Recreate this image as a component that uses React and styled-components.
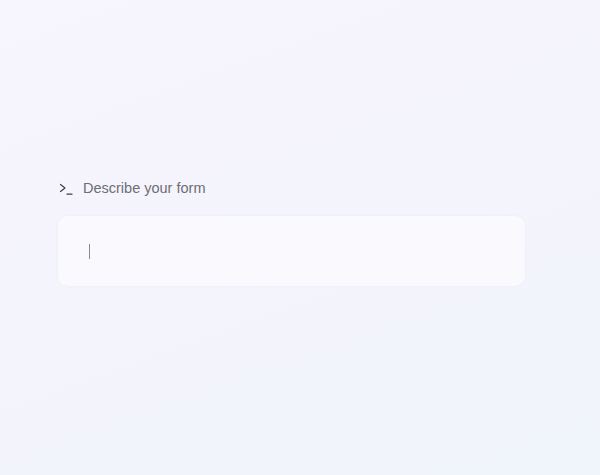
import React from 'react';
import styled, { createGlobalStyle } from 'styled-components';

const GlobalStyle = createGlobalStyle`
  html, body {
    margin: 0;
    padding: 0;
  }
  body {
    font-family: 'Liberation Sans', Arial, sans-serif;
  }
`;

const Page = styled.div`
  width: 600px;
  height: 475px;
  box-sizing: border-box;
  padding: 179px 75px 0 58px;
  background: linear-gradient(160deg, #f7f5fd 0%, #f4f4fc 50%, #f0f4fb 100%);
`;

const Label = styled.div`
  display: flex;
  align-items: center;
  gap: 9px;
  height: 18px;
  padding-left: 1px;
  color: #6e6e76;
  font-size: 14.5px;
`;

const Prompt = styled.svg`
  width: 15px;
  height: 15px;
  flex-shrink: 0;
`;

const InputBox = styled.div`
  margin-top: 19px;
  height: 70px;
  box-sizing: border-box;
  padding: 28px 31px;
  border-radius: 10px;
  background: #faf9fd;
  box-shadow: 0 0 3px rgba(210, 210, 235, 0.2);
`;

const Caret = styled.div`
  width: 1px;
  height: 15px;
  background: #8a8a92;
`;

export default function App() {
  return (
    <>
      <GlobalStyle />
      <Page>
        <Label>
          <Prompt viewBox="0 0 15 15" fill="none" stroke="#3e3e46" strokeWidth="1.2" strokeLinecap="round" strokeLinejoin="round">
            <path d="M1.5 3.5 L6 7 L1.5 10.5" />
            <path d="M8 13.2 H13" />
          </Prompt>
          <span>Describe your form</span>
        </Label>
        <InputBox>
          <Caret />
        </InputBox>
      </Page>
    </>
  );
}
